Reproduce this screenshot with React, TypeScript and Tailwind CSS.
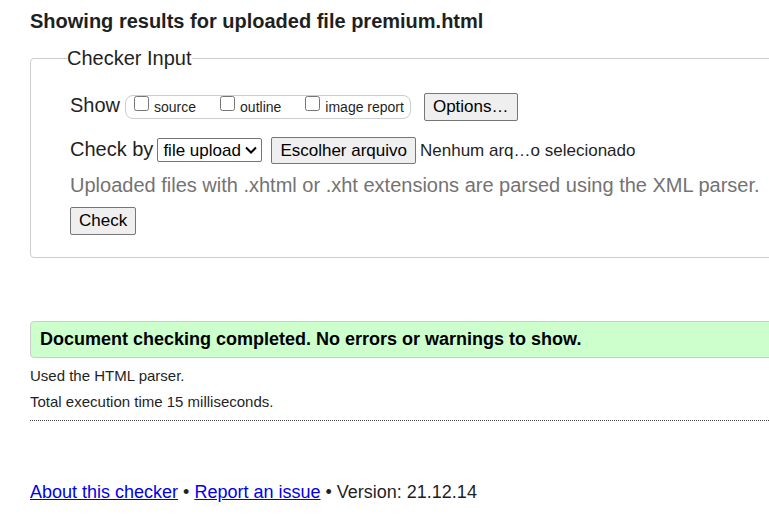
import React, { useRef } from 'react';

const checks = [
  { id: 'source', label: 'source' },
  { id: 'outline', label: 'outline' },
  { id: 'imagereport', label: 'image report' },
];

const buttonClass =
  'rounded-xs border border-[#767676] bg-[#efefef] px-2 text-[17px] leading-6 text-black';

export default function App() {
  const fileInput = useRef<HTMLInputElement>(null);

  return (
    <div className="overflow-hidden bg-white pl-[30px] pt-[6px] font-['Liberation_Sans',Arial,sans-serif] text-[#1f1f1f]">
      <h1 className="text-xl leading-[30px] font-bold">Showing results for uploaded file premium.html</h1>
      <form onSubmit={(e) => e.preventDefault()}>
        <fieldset className="-mr-5 mt-2 min-w-0 rounded border border-[#cccccc] pl-[39px] pb-[22px]">
          <legend className="-ml-[3px] text-xl leading-7">Checker Input</legend>
          <div className="mt-[21px] flex h-7 items-center whitespace-nowrap">
            <span className="pb-1 text-xl">Show</span>
            <div className="ml-[5px] flex h-6 items-center gap-6 rounded-lg border border-[#cccccc] pl-2 pr-[6px] text-sm">
              {checks.map((c) => (
                <label key={c.id} htmlFor={c.id} className="flex items-center gap-[5px]">
                  <input id={c.id} type="checkbox" className="mb-2 size-[15px]" />
                  {c.label}
                </label>
              ))}
            </div>
            <button type="button" className={`${buttonClass} ml-[13px] h-7`}>Options…</button>
          </div>
          <div className="mt-4 flex h-[27px] items-center whitespace-nowrap">
            <label htmlFor="by" className="pb-[3px] text-xl">Check by</label>
            <div className="mb-px ml-1 grid items-center">
              <select id="by" className="col-start-1 row-start-1 h-6 w-[105px] appearance-none rounded-xs border border-[#767676] bg-white pt-px pl-[5px] text-[17px] leading-[22px] text-black">
                <option>file upload</option>
                <option>address</option>
                <option>text input</option>
              </select>
              <svg aria-hidden="true" viewBox="0 0 12 8" className="pointer-events-none col-start-1 row-start-1 mr-[5px] h-2 w-3 justify-self-end" fill="none" stroke="#000" strokeWidth="2">
                <path d="M1 1.5 6 6.5 11 1.5" />
              </svg>
            </div>
            <button type="button" onClick={() => fileInput.current?.click()} className={`${buttonClass} ml-[9px] h-[27px]`}>Escolher arquivo</button>
            <input ref={fileInput} type="file" aria-label="Escolher arquivo" className="hidden" />
            <span className="ml-1 text-[17px]">Nenhum arq…o selecionado</span>
          </div>
          <p className="mt-[7px] text-xl leading-7 whitespace-nowrap text-[#737373]">
            Uploaded files with .xhtml or .xht extensions are parsed using the XML parser.
          </p>
          <button type="submit" className={`${buttonClass} mt-2 h-7`}>Check</button>
        </fieldset>
      </form>
      <p className="-mr-5 mt-[63px] rounded border border-[#cccccc] bg-[#ccffcc] px-[9px] py-[5px] text-lg leading-[25px] font-bold text-black">
        Document checking completed. No errors or warnings to show.
      </p>
      <p className="mt-2 text-[15px] leading-5">Used the HTML parser.</p>
      <p className="mt-[6px] text-[15px] leading-5">Total execution time 15 milliseconds.</p>
      <hr className="mt-2 border-t border-dotted border-[#444444]" />
      <footer className="mt-[57px] text-lg leading-7">
        <a href="#about" className="text-[#0000ee] underline">About this checker</a> •{' '}
        <a href="#issue" className="text-[#0000ee] underline">Report an issue</a> • Version: 21.12.14
      </footer>
    </div>
  );
}
